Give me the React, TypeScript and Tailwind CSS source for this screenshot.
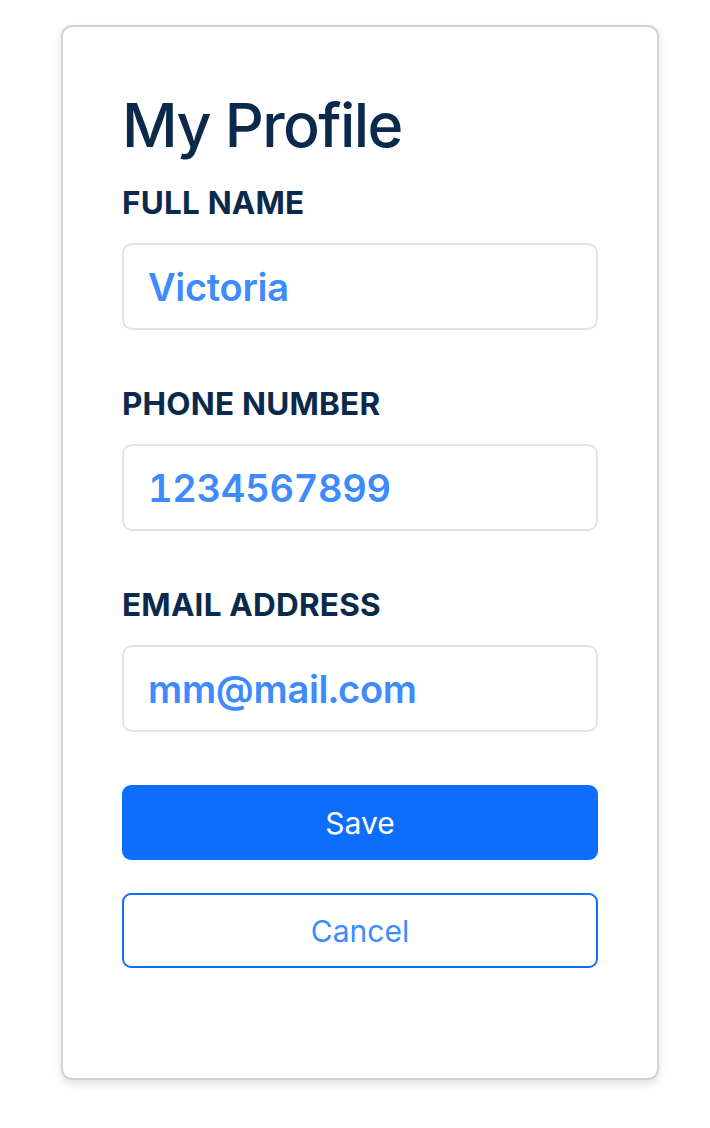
import React from "react";

interface FieldProps {
  label: string;
  value: string;
}

const Field = ({ label, value }: FieldProps) => (
  <div className="flex flex-col">
    <label className="text-[31.5px] leading-[34px] font-bold text-[#0b2a4b] tracking-[0.2px] mb-[23px]">
      {label}
    </label>
    <div className="h-[87px] w-full rounded-[10px] border-2 border-[#e1e4e8] bg-white flex items-center px-[24px]">
      <span className="text-[38px] leading-none font-semibold text-[#3d8bfd] tracking-[-0.3px] tabular-nums">
        {value}
      </span>
    </div>
  </div>
);

const App = () => {
  return (
    <div
      className="min-h-[1128px] w-[710px] bg-white pt-[25px] pl-[61px]"
      style={{ fontFamily: "Inter, 'Noto Sans', sans-serif" }}
    >
      <div className="w-[598px] h-[1055px] rounded-[11px] border-2 border-[#d2d2d2] bg-white shadow-[0_4px_10px_rgba(0,0,0,0.12)] px-[59px] pt-[61px]">
        <h1 className="text-[61px] leading-[74px] font-medium text-[#0b2a4b] mb-[24px] tracking-[-1.6px]">
          My Profile
        </h1>
        <div className="flex flex-col gap-[57px]">
          <Field label="FULL NAME" value="Victoria" />
          <Field label="PHONE NUMBER" value="1234567899" />
          <Field label="EMAIL ADDRESS" value="mm@mail.com" />
        </div>
        <div className="flex flex-col gap-[33px] mt-[53px]">
          <button className="h-[75px] w-full rounded-[9px] bg-[#0d6efd] text-white text-[30px] leading-none">
            Save
          </button>
          <button className="h-[75px] w-full rounded-[9px] border-2 border-[#0d6efd] bg-white text-[#3d8bfd] text-[30px] leading-none">
            Cancel
          </button>
        </div>
      </div>
    </div>
  );
};

export default App;
